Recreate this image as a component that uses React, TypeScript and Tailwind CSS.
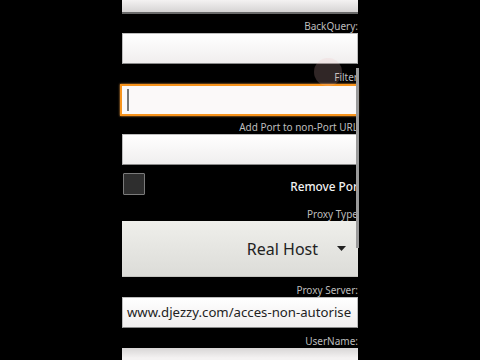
import React from "react";

const font = { fontFamily: '"Noto Sans", "Open Sans", sans-serif' };

function Label({ text, h }: { text: string; h: string }) {
  return (
    <div className={`${h} flex items-end justify-end pb-[2px] text-[10px] leading-none text-[#bdbdbd]`}>
      {text}
    </div>
  );
}

function Field({ h, children }: { h: string; children?: React.ReactNode }) {
  return (
    <div
      className={`${h} flex items-center bg-gradient-to-b from-[#ffffff] to-[#f0eeee] border border-[#bdbdbd] border-b-[#8a8a8a]`}
    >
      {children}
    </div>
  );
}

export default function App() {
  return (
    <div className="relative w-[480px] h-[360px] overflow-hidden bg-black" style={font}>
      <div className="ml-[122px] w-[236px] flex flex-col">
        <div className="h-[14px] bg-gradient-to-b from-[#f4f2f2] to-[#d6d4d4] border-b-2 border-[#6a6a6a]" />
        <Label text="BackQuery:" h="h-[19px]" />
        <Field h="h-[31px]" />
        <Label text="Filter" h="h-[20px]" />
        <div className="ml-[-2px] h-[32px] border-2 border-[#f7941d] bg-[#fbf9f9] flex items-center pl-[5px] shadow-[0_0_2px_#f7a64a]">
          <div className="w-[1.5px] h-[22px] bg-[#777]" />
        </div>
        <Label text="Add Port to non-Port URL" h="h-[18px]" />
        <Field h="h-[31px]" />
        <div className="h-[38px] flex items-center justify-between">
          <div className="ml-[1px] w-[22px] h-[22px] bg-[#2e2e2e] border border-[#7a7a7a] rounded-[1px]" />
          <div className="text-[11.8px] font-medium text-[#f2f2f2] leading-none mt-[6px]">Remove Por</div>
        </div>
        <Label text="Proxy Type" h="h-[18px]" />
        <div className="h-[56px] bg-gradient-to-b from-[#efefeb] to-[#dcdcd8] border-b border-[#c4c4c0] flex items-center justify-end pr-[12px]">
          <span className="text-[16px] text-[#222] leading-none">Real Host</span>
          <svg width="9" height="5" viewBox="0 0 9 5" className="ml-[19px]">
            <path d="M0 0 L9 0 L4.5 5 Z" fill="#222" />
          </svg>
        </div>
        <Label text="Proxy Server:" h="h-[20px]" />
        <Field h="h-[31px]">
          <span className="pl-[4px] text-[13.2px] text-[#222] whitespace-nowrap leading-none">
            www.djezzy.com/acces-non-autorise
          </span>
        </Field>
        <Label text="UserName:" h="h-[20px]" />
        <div className="h-[20px] bg-gradient-to-b from-[#d8d6d6] via-[#f4f2f2] to-[#f4f2f2]" />
      </div>
      <div className="absolute left-[356px] top-[68px] w-[3px] h-[180px] bg-[#9a9a9a]" />
      <div className="absolute left-[314px] top-[58px] w-[28px] h-[28px] rounded-full bg-[rgba(240,190,190,0.2)]" />
    </div>
  );
}
